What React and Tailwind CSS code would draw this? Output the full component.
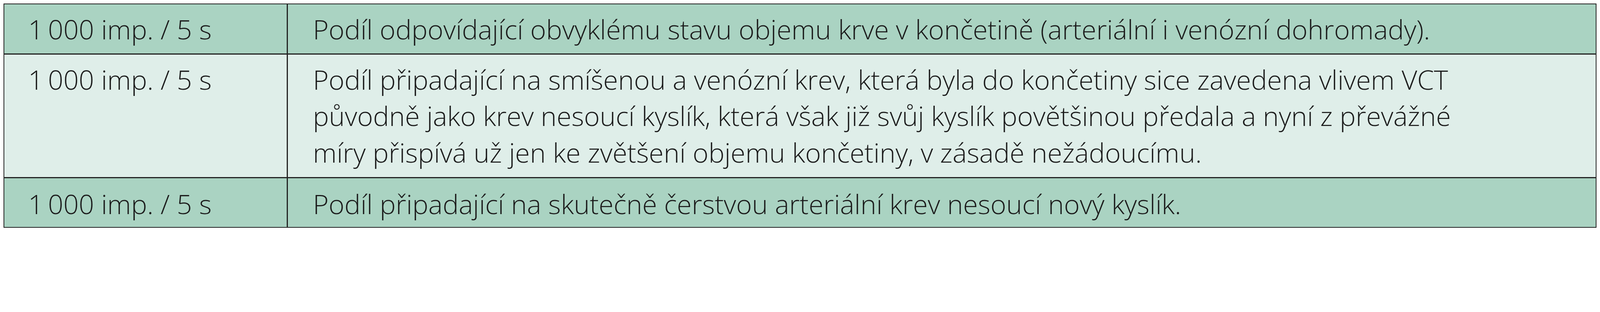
import React from "react";

const rows = [
  {
    value: "1\u2009000 imp. / 5 s",
    lines: [
      "Podíl odpovídající obvyklému stavu objemu krve v končetině (arteriální i venózní dohromady).",
    ],
    dark: true,
    pad: "pt-[16.5px] pb-[15.75px]",
  },
  {
    value: "1\u2009000 imp. / 5 s",
    lines: [
      "Podíl připadající na smíšenou a venózní krev, která byla do končetiny sice zavedena vlivem VCT",
      "původně jako krev nesoucí kyslík, která však již svůj kyslík povětšinou předala a nyní z převážné",
      "míry přispívá už jen ke zvětšení objemu končetiny, v zásadě nežádoucímu.",
    ],
    dark: false,
    pad: "pt-[16.5px] pb-[15.75px]",
  },
  {
    value: "1\u2009000 imp. / 5 s",
    lines: [
      "Podíl připadající na skutečně čerstvou arteriální krev nesoucí nový kyslík.",
    ],
    dark: true,
    pad: "pt-[19.5px] pb-[12px]",
  },
];

export default function App() {
  return (
    <div className="bg-white px-[9px] pt-[9px] pb-[6px]">
      <div
        className="border-[2.25px] border-[#222222] text-[#1c1c1c] text-[69px] leading-[93.75px] font-light"
        style={{ fontFamily: '"Open Sans", "Noto Sans", sans-serif' }}
      >
        {rows.map((row, i) => (
          <div
            key={i}
            className={
              "flex " +
              (i > 0 ? "border-t-[3px] border-[#222222] " : "") +
              (row.dark ? "bg-[#aad3c2]" : "bg-[#dfeee9]")
            }
          >
            <div className={"w-[726px] shrink-0 border-r-[3px] border-[#222222] pl-[61px] whitespace-nowrap " + row.pad}>
              {row.value}
            </div>
            <div className={"flex-1 min-w-0 pl-[64px] whitespace-nowrap " + row.pad}>
              {row.lines.map((line, j) => (
                <div key={j}>{line}</div>
              ))}
            </div>
          </div>
        ))}
      </div>
    </div>
  );
}
